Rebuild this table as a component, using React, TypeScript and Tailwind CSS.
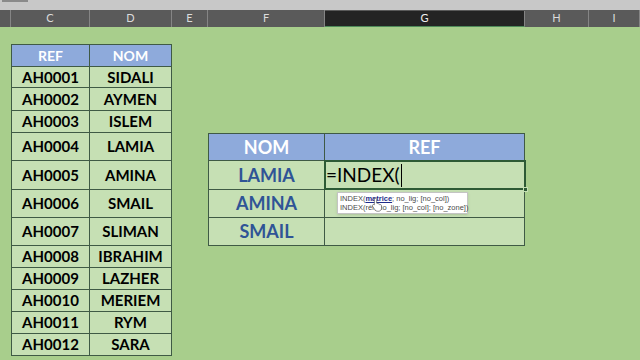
import React from 'react';

const font = { fontFamily: 'Lato, "Open Sans", sans-serif' };

const columns = [
  { label: '', w: 'w-[11px]' },
  { label: 'C', w: 'w-[79px]' },
  { label: 'D', w: 'w-[82px]' },
  { label: 'E', w: 'w-[36px]' },
  { label: 'F', w: 'w-[117px]' },
  { label: 'G', w: 'w-[200px]', active: true },
  { label: 'H', w: 'w-[64px]' },
  { label: 'I', w: 'w-[51px]' },
];

const people = [
  ['AH0001', 'SIDALI'],
  ['AH0002', 'AYMEN'],
  ['AH0003', 'ISLEM'],
  ['AH0004', 'LAMIA'],
  ['AH0005', 'AMINA'],
  ['AH0006', 'SMAIL'],
  ['AH0007', 'SLIMAN'],
  ['AH0008', 'IBRAHIM'],
  ['AH0009', 'LAZHER'],
  ['AH0010', 'MERIEM'],
  ['AH0011', 'RYM'],
  ['AH0012', 'SARA'],
];

const line = 'border-[#3f5a45]';

function HandCursor() {
  return (
    <svg width="12" height="15" viewBox="0 0 16 20" className="absolute left-[33px] top-[4px] z-20">
      <path
        d="M6 1.5c.8 0 1.5.7 1.5 1.5v5.2l.4-.1c.8 0 1.4.5 1.5 1.2.2-.1.5-.2.8-.2.8 0 1.4.5 1.5 1.2.2-.1.5-.2.8-.2.9 0 1.5.7 1.5 1.5V15c0 2.2-1.8 4-4 4H8.6c-1.4 0-2.6-.7-3.3-1.8L2 12.2c-.4-.7-.2-1.6.5-2 .6-.4 1.4-.3 1.9.2l.1.1V3c0-.8.7-1.5 1.5-1.5z"
        fill="#fff"
        stroke="#444"
        strokeWidth="0.8"
      />
    </svg>
  );
}

function Tooltip() {
  return (
    <div
      className="absolute left-[12px] top-[31px] z-10 w-[131px] border border-[#c4c4c4] bg-white px-[2px] py-[1px] text-[7.5px] leading-[9px] whitespace-nowrap text-[#4a4a4a] shadow-sm"
      style={{ fontFamily: '"Liberation Sans", Arial, sans-serif' }}
    >
      <div>
        INDEX(<span className="font-bold text-[#1f2d8a] underline">matrice</span>; no_lig; [no_col])
      </div>
      <div>INDEX(réf; no_lig; [no_col]; [no_zone])</div>
      <HandCursor />
    </div>
  );
}

export default function App() {
  return (
    <div className="h-[360px] w-[640px] overflow-hidden bg-[#a8ce8c]" style={font}>
      {/* ribbon edge */}
      <div className="flex h-[10px] items-start bg-[#c8c8c8] pl-[2px]">
        <div className="h-[2px] w-[26px] bg-[#8a8a8a]" />
      </div>

      {/* column letters */}
      <div className="flex h-[17px] bg-[#5a5a5a] text-[11px] text-[#dcdcdc]">
        {columns.map((c) => (
          <div
            key={c.label + c.w}
            className={`${c.w} flex items-center justify-center border-r border-[#858585] ${
              c.active ? 'mt-px border-b border-b-[#4f8a5a] bg-[#242424] text-[#f0f0f0]' : ''
            }`}
          >
            {c.label}
          </div>
        ))}
      </div>

      {/* sheet */}
      <div className="grid grid-cols-[11px_79px_82px_36px_117px_200px_64px_51px] grid-rows-[17px_23px_21px_23px_22px_28px_29px_28px_28px_22px_22px_22px_22px_22px_4px]">
        {/* REF / NOM list */}
        <div className="col-start-2 col-span-2 row-start-2 row-span-13 grid grid-cols-subgrid grid-rows-subgrid text-[15px] font-bold">
          <div className={`flex items-center justify-center border border-r ${line} bg-[#8eaadb] text-[14px] text-white`}>REF</div>
          <div className={`flex items-center justify-center border-y border-r ${line} bg-[#8eaadb] text-[14px] text-white`}>NOM</div>
          {people.map(([ref, nom]) => (
            <React.Fragment key={ref}>
              <div className={`flex items-center justify-center border-x border-b ${line} bg-[#c6e0b4] text-black`}>{ref}</div>
              <div className={`flex items-center justify-center border-r border-b ${line} bg-[#c6e0b4] text-black`}>{nom}</div>
            </React.Fragment>
          ))}
        </div>

        {/* lookup table */}
        <div className="col-start-5 col-span-2 row-start-6 row-span-4 grid grid-cols-subgrid grid-rows-subgrid font-bold">
          <div className={`flex items-center justify-center border ${line} bg-[#8eaadb] text-[18px] text-white`}>NOM</div>
          <div className={`flex items-center justify-center border-y border-r ${line} bg-[#8eaadb] text-[18px] text-white`}>REF</div>

          <div className={`flex items-center justify-center border-x border-b ${line} bg-[#c6e0b4] text-[18px] text-[#2f5496]`}>LAMIA</div>
          <div className={`relative flex items-center border-r border-b ${line} bg-[#c6e0b4] pl-[1px] text-[19px] font-normal text-black`}>
            <span>=INDEX(</span>
            <span className="ml-px h-[23px] w-px bg-black" />
            <div className="absolute -left-px -top-px -right-[2px] -bottom-[1px] border-2 border-[#2d5a35]" />
            <div className="absolute -right-[4px] -bottom-[3px] h-[5px] w-[5px] border border-[#c6e0b4] bg-[#2d5a35]" />
            <Tooltip />
          </div>

          <div className={`flex items-center justify-center border-x border-b ${line} bg-[#c6e0b4] text-[18px] text-[#2f5496]`}>AMINA</div>
          <div className={`border-r border-b ${line} bg-[#c6e0b4]`} />

          <div className={`flex items-center justify-center border-x border-b ${line} bg-[#c6e0b4] text-[18px] text-[#2f5496]`}>SMAIL</div>
          <div className={`border-r border-b ${line} bg-[#c6e0b4]`} />
        </div>
      </div>
    </div>
  );
}
